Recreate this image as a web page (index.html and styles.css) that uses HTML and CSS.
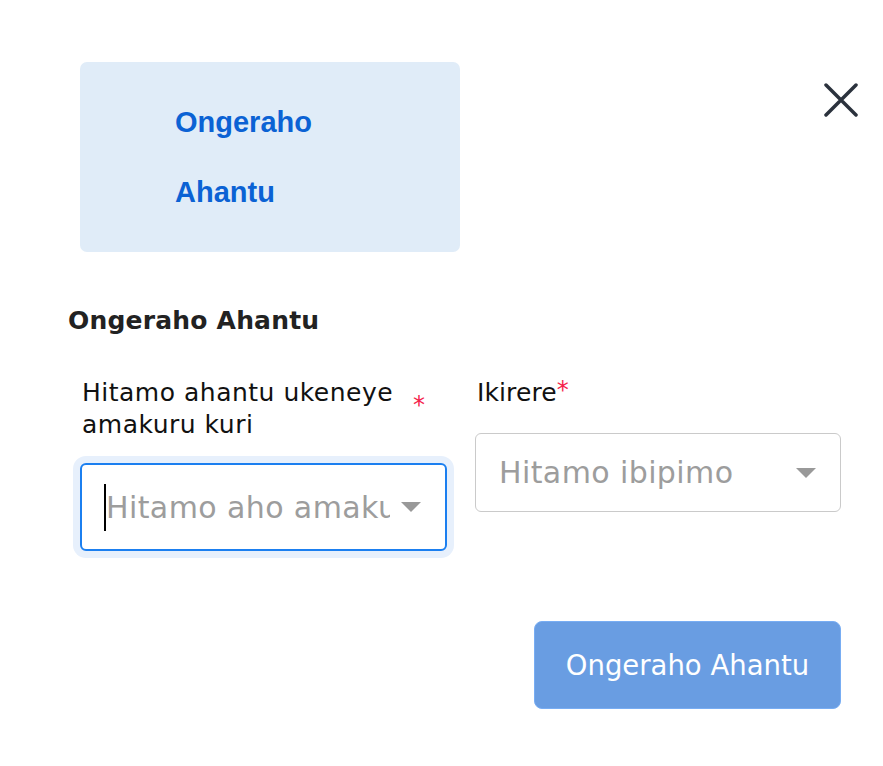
FILE: index.html
```html
<!DOCTYPE html>
<html lang="rw">
<head>
<meta charset="utf-8">
<title>Ongeraho Ahantu</title>
<link rel="stylesheet" href="styles.css">
</head>
<body>
<div class="modal">
  <div class="top">
    <div class="banner"><span class="banner-text">Ongeraho Ahantu</span></div>
    <button class="close" aria-label="close">
      <svg width="34" height="34" viewBox="0 0 34 34"><path d="M2 2 L32 32 M32 2 L2 32" stroke="#2b323d" stroke-width="3.5" stroke-linecap="round" fill="none"/></svg>
    </button>
  </div>
  <h2 class="title">Ongeraho Ahantu</h2>
  <div class="fields">
    <div class="field">
      <div class="label-row">
        <label class="label label-wide">Hitamo ahantu ukeneye amakuru kuri</label>
        <span class="req req-side">*</span>
      </div>
      <div class="select focused">
        <span class="cursor"></span>
        <span class="placeholder clip">Hitamo aho amakuru</span>
        <span class="caret"></span>
      </div>
    </div>
    <div class="field">
      <div class="label-row">
        <label class="label label-short">Ikirere</label><span class="req req-sup">*</span>
      </div>
      <div class="select plain">
        <span class="placeholder">Hitamo ibipimo</span>
        <span class="caret"></span>
      </div>
    </div>
  </div>
  <div class="actions">
    <button class="submit">Ongeraho Ahantu</button>
  </div>
</div>
</body>
</html>
```
FILE: styles.css
```css
* { box-sizing: border-box; }
html, body { margin: 0; padding: 0; background: #fff; }
body { font-family: "DejaVu Sans", Verdana, sans-serif; color: #1f1f1f; }

.modal { padding: 62px 42px 0 68px; }

.top { display: flex; justify-content: space-between; align-items: flex-start; padding-left: 12px; }

.banner {
  width: 380px; height: 190px;
  background: #e0ecf8;
  border-radius: 7px;
  display: flex; align-items: center;
  padding-left: 95px;
}
.banner-text {
  font-family: "Liberation Sans", Arial, sans-serif;
  font-weight: 700;
  font-size: 29px;
  line-height: 70px;
  color: #0b62d4;
  width: 150px;
}

.close {
  background: none; border: 0; padding: 0;
  margin-top: 21px; margin-right: -17px;
  width: 34px; height: 34px;
  display: flex;
}

.title {
  margin: 54px 0 0 0;
  font-size: 25px;
  font-weight: 700;
  color: #222;
  line-height: 30px;
  letter-spacing: 0.2px;
}

.fields {
  display: grid;
  grid-template-columns: 367px 366px;
  column-gap: 28px;
  margin-top: 41px;
  padding-left: 12px;
  align-items: start;
}

.label-row { display: flex; align-items: flex-start; padding-left: 2px; }
.label { font-size: 25px; line-height: 32px; color: #111; letter-spacing: 0.5px; }
.label-wide { width: 331px; }
.label-short { letter-spacing: 0.1px; }
.req { color: #f5224b; font-size: 24px; }
.req-side { padding-top: 18px; line-height: 20px; }
.req-sup { line-height: 18px; padding-top: 4px; }

.select {
  margin-top: 22px;
  display: flex; align-items: center;
  border-radius: 6px;
  background: #fff;
}
.select.focused {
  height: 88px;
  border: 2px solid #1b7ff0;
  box-shadow: 0 0 0 7px #e7f0fc;
  padding-left: 22px;
  padding-right: 24px;
}
.select.plain {
  height: 79px;
  border: 1px solid #cacaca;
  padding-left: 23px;
  padding-right: 24px;
  margin-top: 24px;
}
.placeholder {
  font-size: 30px; color: #9d9d9d;
  letter-spacing: 0.4px;
  white-space: nowrap; flex: 1;
  overflow: hidden;
}
.placeholder.clip { width: 284px; flex: none; }
.cursor {
  width: 2px; height: 47px; background: #000;
  flex: none;
}
.caret {
  margin-left: auto;
  width: 0; height: 0;
  border-left: 10px solid transparent;
  border-right: 10px solid transparent;
  border-top: 10px solid #999;
  flex: none;
}

.actions { display: flex; justify-content: flex-end; margin-top: 70px; }
.submit {
  width: 307px; height: 88px;
  background: #699de2;
  border: 1px solid #78adf3;
  border-radius: 8px;
  color: #fff;
  font-family: "DejaVu Sans", Verdana, sans-serif;
  font-size: 27.5px;
  padding: 0;
}
```
